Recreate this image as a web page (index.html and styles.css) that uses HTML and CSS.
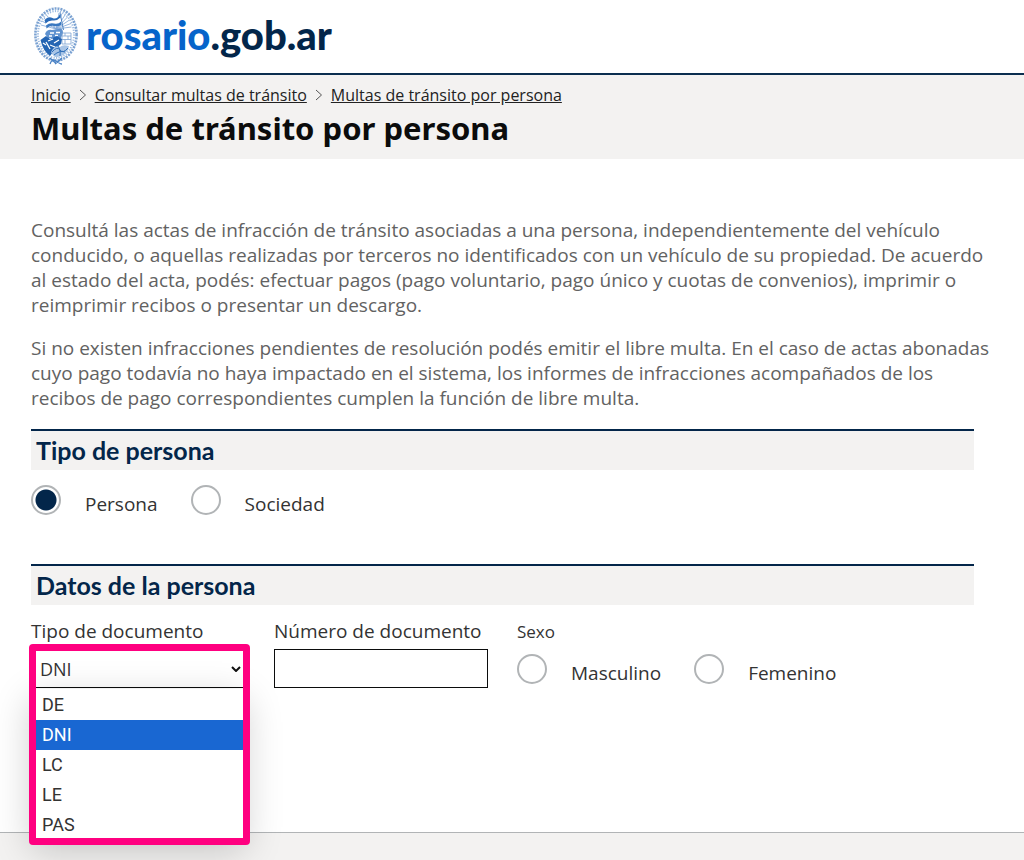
FILE: index.html
```html
<!DOCTYPE html>
<html lang="es">
<head>
  <meta charset="UTF-8" />
  <meta name="viewport" content="width=device-width, initial-scale=1.0" />
  <title>Multas de tránsito por persona</title>
  <link rel="stylesheet" href="styles.css">
</head>
<body>
  <header class="site-header">
    <a class="logo" href="#">
      <svg class="crest" viewBox="0 0 44 58" fill="none" aria-hidden="true">
        <!-- wreath -->
        <ellipse cx="22" cy="27.500" rx="20.600" ry="26" stroke="#7ba2d2" stroke-width="2.600" stroke-dasharray="2 1" />
        <ellipse cx="22" cy="27.500" rx="18" ry="23.400" stroke="#9dbbe0" stroke-width="2" stroke-dasharray="1.200 1.400" />
        <!-- sun rays -->
        <path d="M22 22 8 14M22 22 10 11M22 22 13 8.500M22 22 25 6M22 22 28 6.500M22 22 31 8M22 22 33.500 10M22 22 35.500 13M22 22 37 16.500M22 22 37.500 20M22 22 7 18" stroke="#7ea5d5" stroke-width=".8" />
        <!-- flag -->
        <path d="M10.500 13Q14 9 18.500 11T26 7L27.500 18Q24 20 20 19T12.500 21.500Z" fill="#fff" />
        <path d="M10.500 13Q14 9 18.500 11T26 7L26.500 10.500Q23 14 19 13.500T11.500 16.500Z" fill="#2b6bb8" />
        <path d="M12 18.500Q15.500 15.500 20 16.500T27 14.500L27.500 18Q24 20 20 19T12.500 21.500Z" fill="#3a78c0" />
        <path d="M26 5.500 29.500 23" stroke="#2b6bb8" stroke-width=".8" />
        <!-- arm and battery -->
        <path d="M11 27Q13 22 18 23L24 22Q29 20 29 26L27 31H14Z" fill="#5f92cf" />
        <path d="M16 26H20M22 25.500H26M15 29H18M21 28.500H24" stroke="#fff" stroke-width="1.700" />
        <path d="M28 26H37V37H28ZM28 29H37M28 32.500H37M31 26V29M34 29V32.500M31 32.500V37" stroke="#7ba2d2" stroke-width=".8" />
        <path d="M6.500 33 12 29 16 32 23 29 28 32 27 37 22 41 16 49Q9 44 6.500 33Z" fill="#2465b3" />
        <path d="M14 34 19 32M20 36 25 33M9 36 12 38M12 35 16 42M16 38 21 40" stroke="#fff" stroke-width="1.300" />
        <path d="M17 45Q21 37 26 40Q29 37 35 39L34 43Q30 49 25 49.500Q20 52 17 45Z" fill="#a9c5e6" />
        <path d="M18 45Q23 39 26 43T34 41M20 48Q26 43 31 45M23 38Q27 42 26 49" stroke="#2f6fba" stroke-width="1" />
        <!-- ribbon -->
        <path d="M16 57Q18 51 22 54T28 57M28 51Q25 54 21 57M16 51Q20 55 22 56" stroke="#4b83c5" stroke-width="1.300" />
      </svg>
      <span class="logo-text"><span class="logo-city">rosario</span>.gob.ar</span>
    </a>
  </header>

  <div class="page-head">
    <nav class="breadcrumb" aria-label="Ruta">
      <a href="#">Inicio</a>
      <svg class="chevron" viewBox="0 0 8 12" aria-hidden="true"><path d="M1 1l5.500 5L1 11" /></svg>
      <a href="#">Consultar multas de tránsito</a>
      <svg class="chevron" viewBox="0 0 8 12" aria-hidden="true"><path d="M1 1l5.500 5L1 11" /></svg>
      <a href="#">Multas de tránsito por persona</a>
    </nav>
    <h1>Multas de tránsito por persona</h1>
  </div>

  <main>
    <p>Consultá las actas de infracción de tránsito asociadas a una persona, independientemente del vehículo conducido, o aquellas realizadas por terceros no identificados con un vehículo de su propiedad. De acuerdo al estado del acta, podés: efectuar pagos (pago voluntario, pago único y cuotas de convenios), imprimir o reimprimir recibos o presentar un descargo.</p>
    <p>Si no existen infracciones pendientes de resolución podés emitir el libre multa. En el caso de actas abonadas cuyo pago todavía no haya impactado en el sistema, los informes de infracciones acompañados de los recibos de pago correspondientes cumplen la función de libre multa.</p>

    <form>
      <h2>Tipo de persona</h2>
      <div class="radios person-type">
        <label><input type="radio" name="tipo" checked /><span>Persona</span></label>
        <label><input type="radio" name="tipo" /><span>Sociedad</span></label>
      </div>

      <h2>Datos de la persona</h2>
      <div class="row">
        <div class="field">
          <label for="tipoDoc">Tipo de documento</label>
          <div class="select-wrap">
            <select id="tipoDoc">
              <option>DE</option>
              <option selected>DNI</option>
              <option>LC</option>
              <option>LE</option>
              <option>PAS</option>
            </select>
            <svg class="arrow" viewBox="0 0 10 6" aria-hidden="true"><path d="M1 1l4 4 4-4" /></svg>
            <ul class="options" role="listbox" aria-label="Tipo de documento">
              <li role="option">DE</li>
              <li role="option" class="active" aria-selected="true">DNI</li>
              <li role="option">LC</li>
              <li role="option">LE</li>
              <li role="option">PAS</li>
            </ul>
            <div class="highlight"></div>
          </div>
        </div>
        <div class="field">
          <label for="numDoc">Número de documento</label>
          <input type="text" id="numDoc" />
        </div>
        <fieldset class="field">
          <legend>Sexo</legend>
          <div class="radios">
            <label><input type="radio" name="sexo" /><span>Masculino</span></label>
            <label><input type="radio" name="sexo" /><span>Femenino</span></label>
          </div>
        </fieldset>
      </div>
    </form>
  </main>

  <footer></footer>
</body>
</html>
```

FILE: styles.css
```css
* {
  box-sizing: border-box;
}
body {
  margin: 0;
  min-height: 100vh;
  display: flex;
  flex-direction: column;
  font-family: "Open Sans", sans-serif;
  font-size: 19px;
  line-height: 25px;
  color: #333;
  background: #fff;
}
.site-header {
  padding: 7px 34px 8px;
  border-bottom: 2px solid #0b2e4f;
}
.logo {
  display: flex;
  gap: 8px;
  text-decoration: none;
  color: #03264a;
}
.crest {
  width: 44px;
  height: 58px;
}
.logo-text {
  font-family: Lato, sans-serif;
  font-weight: 900;
  font-size: 40px;
  line-height: 56px;
}
.logo-city {
  color: #0664ca;
}
.page-head {
  padding: 8px 50px 9px 31px;
  background: #f3f2f1;
}
.breadcrumb {
  display: flex;
  align-items: center;
  gap: 8px;
  font-size: 16px;
  line-height: 24px;
}
.breadcrumb a {
  color: #222;
}
.chevron {
  width: 8px;
  height: 12px;
  fill: none;
  stroke: #555;
}
h1 {
  margin: 0;
  font-family: "Noto Sans", sans-serif;
  font-size: 31px;
  line-height: 43px;
  color: #0b0c0c;
}
main {
  padding: 59px 50px 0 31px;
}
p {
  margin: 0 -20px 18px 0;
  color: #626262;
}
h2 {
  margin: 0;
  padding: 0 5px;
  border-top: 2px solid #03264a;
  background: #f3f2f1;
  font-family: Lato, sans-serif;
  font-size: 25px;
  line-height: 39px;
  color: #03264a;
}
.radios {
  display: flex;
  gap: 33px;
}
.radios label {
  display: flex;
  gap: 24px;
}
.radios span {
  padding-top: 7px;
}
.person-type {
  padding: 15px 0 47px;
}
input[type="radio"] {
  appearance: none;
  width: 30px;
  height: 30px;
  margin: 0;
  border: 2px solid #b1b4b6;
  border-radius: 50%;
  background: #fff;
}
input[type="radio"]:checked {
  background: radial-gradient(circle, #03264a 10px, #fff 11px);
}
.row {
  display: flex;
  gap: 29px;
  padding-top: 14px;
}
.field {
  width: 214px;
  margin: 0;
  padding: 0;
  border: 0;
}
fieldset.field {
  width: auto;
}
fieldset .radios {
  padding-top: 5px;
}
.field > label,
legend {
  display: block;
  padding: 0;
  margin-bottom: 5px;
}
legend {
  font-size: 17px;
}
.select-wrap {
  position: relative;
}
input[type="text"],
select {
  display: block;
  width: 100%;
  height: 39px;
  margin: 0;
  padding: 0 8px;
  border: 1px solid #0b0c0c;
  border-radius: 0;
  background: #fff;
  font-family: "Open Sans", sans-serif;
  font-size: 18px;
  color: #333;
}
select {
  appearance: none;
}
.arrow {
  position: absolute;
  top: 17px;
  right: 4px;
  width: 10px;
  height: 6px;
  fill: none;
  stroke: #111;
  stroke-width: 2;
}
.options {
  position: absolute;
  top: 40px;
  left: 0;
  width: 100%;
  margin: 0;
  padding: 1px 0 0;
  list-style: none;
  background: #fff;
  font-family: Roboto, sans-serif;
  font-size: 18px;
  line-height: 30px;
  box-shadow: 0 10px 36px rgba(0, 0, 0, 0.2);
}
.options li {
  padding: 0 11px;
}
.options .active {
  background: #1967d2;
  color: #fff;
}
/* marker drawn over the open drop-down */
.highlight {
  position: absolute;
  top: -5px;
  left: -2px;
  width: 221px;
  height: 201px;
  border: 7px solid #ff0080;
  border-radius: 4px;
  pointer-events: none;
}
footer {
  flex: 1;
  min-height: 27px;
  margin-top: 144px;
  border-top: 1px solid #b1b4b6;
  background: #f3f2f1;
}
```
